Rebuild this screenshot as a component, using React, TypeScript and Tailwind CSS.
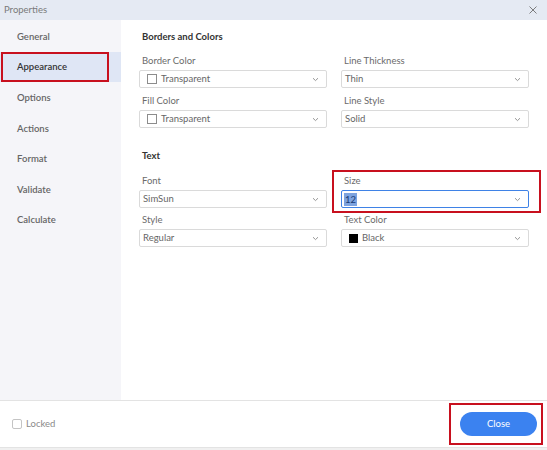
import React from "react";

const navItems = ["General", "Appearance", "Options", "Actions", "Format", "Validate", "Calculate"];

const Chevron = () => (
  <svg width="7" height="5" viewBox="0 0 7 5" className="shrink-0">
    <path d="M1 1.2 L3.5 3.6 L6 1.2" fill="none" stroke="#8a8a8a" strokeWidth="0.9" />
  </svg>
);

type SelectProps = {
  value: string;
  swatch?: "empty" | "black";
  focused?: boolean;
};

const Select = ({ value, swatch, focused }: SelectProps) => (
  <div
    className={
      focused
        ? "flex h-[18px] items-center justify-between rounded-[2px] border border-[#3f82e6] bg-white pl-[2px] pr-[7px]"
        : "flex h-[18px] items-center justify-between rounded-[2px] border border-[#dadada] bg-white pl-[3px] pr-[7px]"
    }
  >
    <div className="flex items-center gap-[4px]">
      {swatch === "empty" && <span className="ml-[4px] h-[10px] w-[10px] border border-[#8c8c8c] bg-white" />}
      {swatch === "black" && <span className="ml-[4px] h-[9px] w-[9px] bg-black" />}
      {focused ? (
        <span className="bg-[#7da3df] px-[1px] leading-[13px] text-[#173a73]">{value}</span>
      ) : (
        <span className="text-[#666]">{value}</span>
      )}
    </div>
    <Chevron />
  </div>
);

type FieldProps = SelectProps & { label: string; marked?: boolean };

const Field = ({ label, marked, ...rest }: FieldProps) => (
  <div className="relative">
    <div className="mb-[2px] h-[14px] pl-[3px] leading-[14px] text-[#6b6b6b]">{label}</div>
    <Select {...rest} />
    {marked && (
      <div className="pointer-events-none absolute -bottom-[5px] -left-[9px] -right-[12px] -top-[4px] border-2 border-[#c8101e]" />
    )}
  </div>
);

export default function App() {
  return (
    <div
      className="flex h-[450px] w-[547px] flex-col bg-[#f0f0f0] text-[9.5px]"
      style={{ fontFamily: "Lato, 'Noto Sans', sans-serif" }}
    >
      {/* title bar */}
      <div className="flex h-[20px] items-center justify-between bg-[#e5eaf3] pl-[4px] pr-[10px]">
        <span className="text-[#7a7a7a]">Properties</span>
        <svg width="8" height="8" viewBox="0 0 8 8">
          <path d="M0.5 0.5 L7.5 7.5 M7.5 0.5 L0.5 7.5" stroke="#6f6f6f" strokeWidth="0.9" />
        </svg>
      </div>

      {/* body */}
      <div className="flex h-[380px]">
        <div className="w-[121px] bg-[#f5f5f9] pt-[1px]">
          {navItems.map((item) => (
            <div
              key={item}
              className={
                item === "Appearance"
                  ? "relative flex h-[30.5px] items-center bg-[#dfe6f5] pl-[17px] pt-[1px] font-semibold text-[#333]"
                  : "flex h-[30.5px] items-center pl-[17px] pt-[2px] font-semibold text-[#666]"
              }
            >
              {item}
              {item === "Appearance" && (
                <div className="pointer-events-none absolute bottom-0 left-[1px] top-0 w-[108px] border-2 border-[#c8101e]" />
              )}
            </div>
          ))}
        </div>

        <div className="flex-1 bg-white pl-[18px] pr-[18px] pt-[10px]">
          <div className="h-[14px] pl-[3px] font-bold leading-[14px] text-[#333]">Borders and Colors</div>
          <div className="mt-[10px] grid grid-cols-2 gap-x-[14px] gap-y-[6px]">
            <Field label="Border Color" value="Transparent" swatch="empty" />
            <Field label="Line Thickness" value="Thin" />
            <Field label="Fill Color" value="Transparent" swatch="empty" />
            <Field label="Line Style" value="Solid" />
          </div>

          <div className="mt-[21px] h-[14px] pl-[3px] font-bold leading-[14px] text-[#333]">Text</div>
          <div className="mt-[11px] grid grid-cols-2 gap-x-[14px] gap-y-[5px]">
            <Field label="Font" value="SimSun" />
            <Field label="Size" value="12" focused marked />
            <Field label="Style" value="Regular" />
            <Field label="Text Color" value="Black" swatch="black" />
          </div>
        </div>
      </div>

      {/* footer */}
      <div className="flex h-[48px] items-center justify-between border-b border-t border-[#e3e3e3] bg-white pl-[12px] pr-[10px]">
        <label className="flex items-center gap-[4px] text-[#8a8a8a]">
          <span className="h-[10px] w-[10px] rounded-[2px] border border-[#c4c4c4] bg-white" />
          Locked
        </label>
        <div className="relative">
          <button className="h-[24px] w-[77px] rounded-full bg-[#3b82f0] text-[9.5px] text-white">Close</button>
          <div className="pointer-events-none absolute -bottom-[9px] -left-[11px] -right-[6px] -top-[9px] border-2 border-[#c8101e]" />
        </div>
      </div>
    </div>
  );
}
